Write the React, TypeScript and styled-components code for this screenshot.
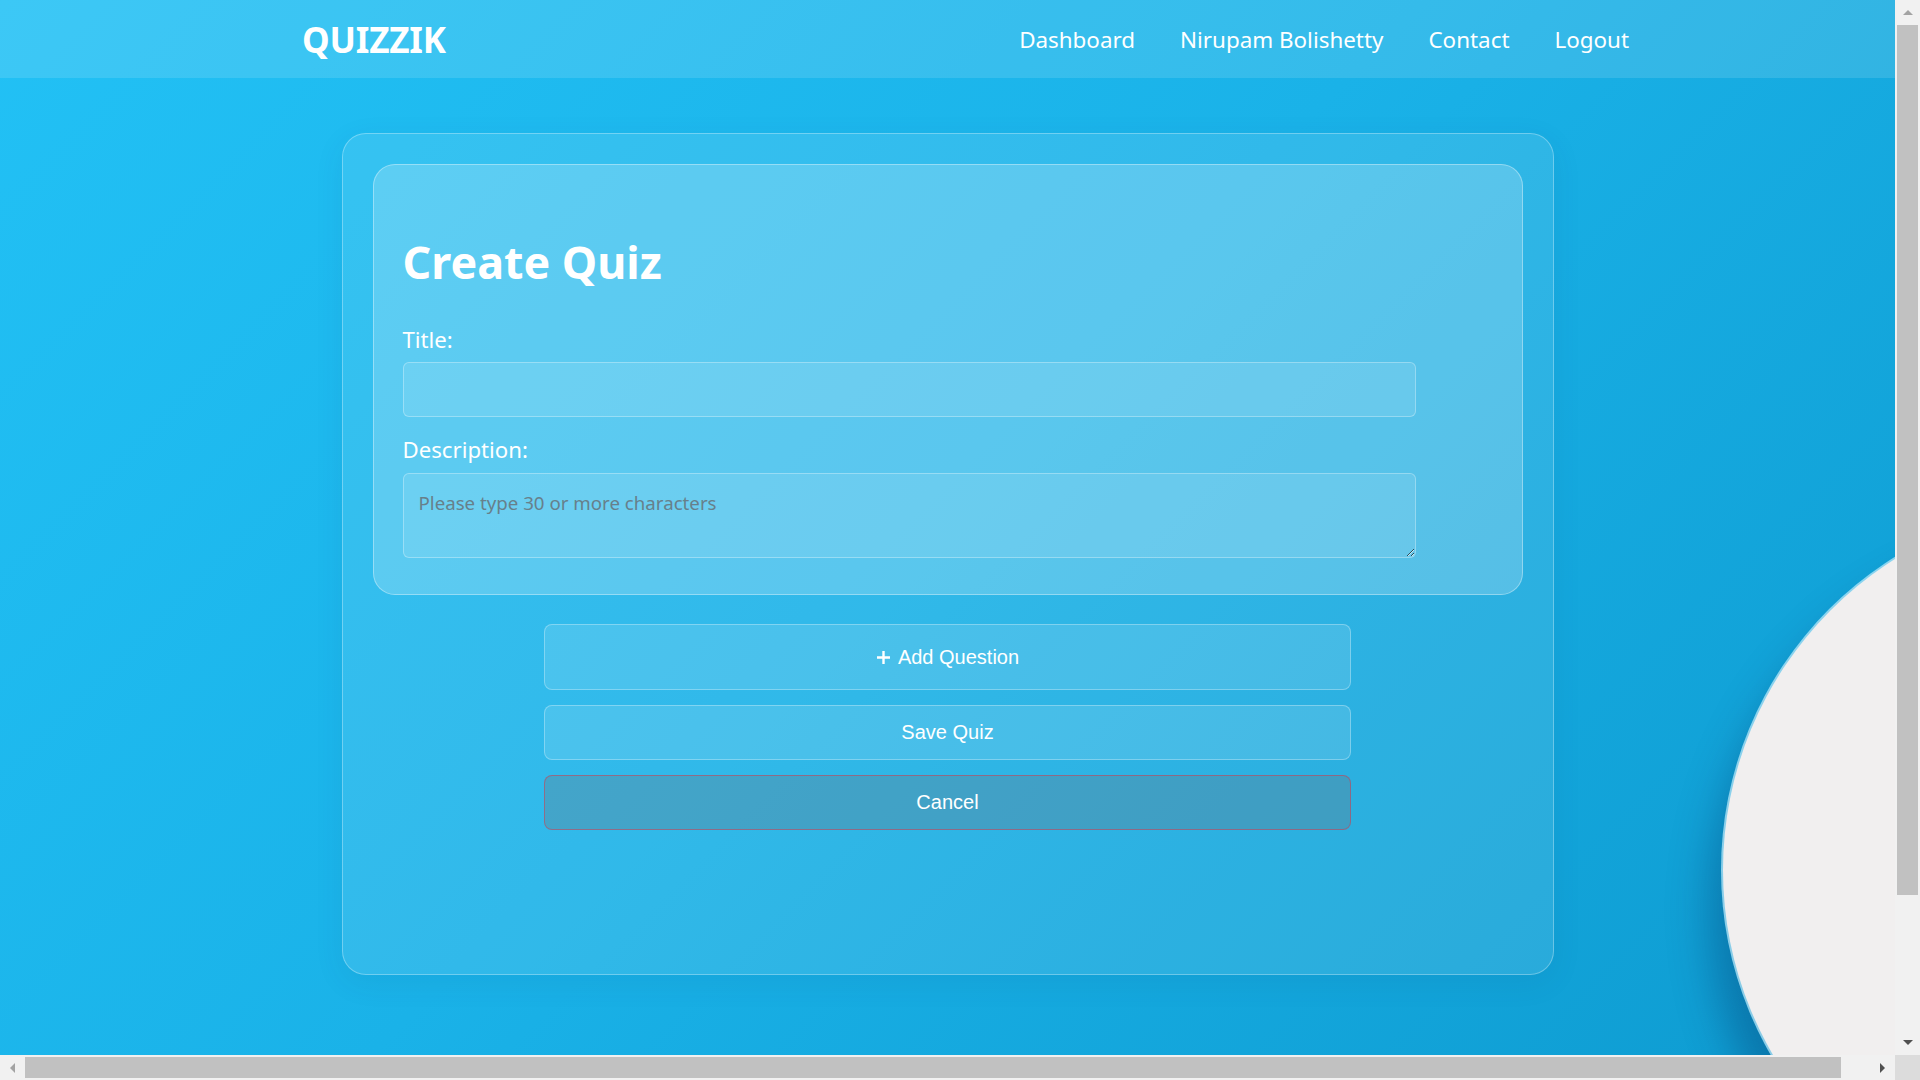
import React from 'react';
import styled, { createGlobalStyle } from 'styled-components';

const GlobalStyle = createGlobalStyle`
  * {
    box-sizing: border-box;
  }

  html,
  body {
    margin: 0;
    padding: 0;
    overflow: hidden;
    background: #f1f1f1;
  }

  body {
    font-family: 'Noto Sans', 'Open Sans', sans-serif;
    color: #fff;
  }
`;

const PlusIcon: React.FC = () => (
  <svg width="15" height="15" viewBox="0 0 15 15" aria-hidden="true">
    <path d="M7.5 1v13M1 7.5h13" stroke="#fff" strokeWidth="2.4" fill="none" />
  </svg>
);

type Dir = 'up' | 'down' | 'left' | 'right';

const ARROW_POINTS: Record<Dir, string> = {
  up: '0,5 5,0 10,5',
  down: '0,0 10,0 5,5',
  left: '5,0 5,10 0,5',
  right: '0,0 0,10 5,5',
};

const Arrow: React.FC<{ dir: Dir; active?: boolean }> = ({ dir, active }) => {
  const vertical = dir === 'up' || dir === 'down';
  return (
    <ArrowButton>
      <svg
        width={vertical ? 10 : 5}
        height={vertical ? 5 : 10}
        viewBox={vertical ? '0 0 10 5' : '0 0 5 10'}
      >
        <polygon points={ARROW_POINTS[dir]} fill={active ? '#505050' : '#a3a3a3'} />
      </svg>
    </ArrowButton>
  );
};

const NAV_LINKS = ['Dashboard', 'Nirupam Bolishetty', 'Contact', 'Logout'];

const App: React.FC = () => {
  return (
    <Frame>
      <GlobalStyle />
      <Viewport>
        <Page>
          <Plate />

          <NavBar>
            <Logo>QUIZZIK</Logo>
            <NavLinks>
              {NAV_LINKS.map(link => (
                <li key={link}>
                  <NavLink href="#">{link}</NavLink>
                </li>
              ))}
            </NavLinks>
          </NavBar>

          <Main>
            <OuterCard>
              <FormCard>
                <Heading>Create Quiz</Heading>
                <Label htmlFor="title">Title:</Label>
                <TextInput id="title" type="text" />
                <Label htmlFor="description">Description:</Label>
                <TextArea
                  id="description"
                  placeholder="Please type 30 or more characters"
                />
              </FormCard>

              <Actions>
                <ActionButton $tall>
                  <PlusIcon />
                  Add Question
                </ActionButton>
                <ActionButton>Save Quiz</ActionButton>
                <ActionButton $variant="cancel">Cancel</ActionButton>
              </Actions>
            </OuterCard>
          </Main>
        </Page>
      </Viewport>

      <VScroll>
        <Arrow dir="up" />
        <VTrack>
          <VThumb />
        </VTrack>
        <Arrow dir="down" active />
      </VScroll>

      <HScroll>
        <Arrow dir="left" />
        <HTrack>
          <HThumb />
        </HTrack>
        <Arrow dir="right" active />
      </HScroll>

      <Corner />
    </Frame>
  );
};

export default App;

// Frame (window with scrollbars)

const Frame = styled.div`
  display: grid;
  grid-template-columns: 1fr 25px;
  grid-template-rows: 1fr 25px;
  width: 100vw;
  height: 100vh;
`;

const Viewport = styled.div`
  overflow: hidden;
  min-width: 0;
  min-height: 0;
`;

const VScroll = styled.div`
  display: flex;
  flex-direction: column;
  background: #f1f1f1;
`;

const HScroll = styled.div`
  display: flex;
  background: #f1f1f1;
`;

const Corner = styled.div`
  background: #dcdcdc;
`;

const ArrowButton = styled.div`
  flex: 0 0 25px;
  width: 25px;
  height: 25px;
  display: flex;
  align-items: center;
  justify-content: center;
`;

const VTrack = styled.div`
  flex: 1;
  padding: 0 2px;
`;

const VThumb = styled.div`
  height: 870px;
  background: #c1c1c1;
`;

const HTrack = styled.div`
  flex: 1;
  padding: 2px 0;
`;

const HThumb = styled.div`
  width: 1816px;
  height: 100%;
  background: #c1c1c1;
`;

// Page

const Page = styled.div`
  position: relative;
  height: 1270px;
  background: linear-gradient(135deg, #22c1f5 0%, #1ab2e8 45%, #0c98cd 100%);
`;

const Plate = styled.div`
  position: absolute;
  left: 1723px;
  top: 503px;
  width: 734px;
  height: 734px;
  border-radius: 50%;
  background: #f1efef;
  box-shadow: 0 0 0 2px rgba(170, 225, 245, 0.8),
    -14px 40px 40px rgba(0, 50, 100, 0.35);
`;

const NavBar = styled.nav`
  position: relative;
  display: flex;
  justify-content: space-between;
  align-items: center;
  height: 78px;
  padding: 0 266px 0 302px;
  background: rgba(255, 255, 255, 0.12);
`;

const Logo = styled.h1`
  margin: 0;
  font-family: 'Noto Sans', 'Open Sans', sans-serif;
  font-size: 35px;
  font-weight: 700;
  letter-spacing: -0.2px;
  color: #fff;
`;

const NavLinks = styled.ul`
  display: flex;
  align-items: center;
  gap: 45px;
  list-style: none;
  margin: 0;
  padding: 0;
`;

const NavLink = styled.a`
  font-size: 22.4px;
  color: #fff;
  text-decoration: none;
`;

const Main = styled.main`
  position: relative;
  display: flex;
  justify-content: center;
  padding-top: 55px;
`;

const OuterCard = styled.section`
  width: 1212px;
  height: 842px;
  padding: 30px;
  background: rgba(255, 255, 255, 0.1);
  border: 1px solid rgba(255, 255, 255, 0.3);
  border-radius: 24px;
  box-shadow: 0 8px 30px rgba(0, 60, 110, 0.08);
`;

const FormCard = styled.div`
  padding: 32px 31px 31px 29px;
  background: rgba(255, 255, 255, 0.2);
  border: 1px solid rgba(255, 255, 255, 0.35);
  border-radius: 22px;
`;

const Heading = styled.h2`
  margin: 38px 0 38px;
  font-size: 44.8px;
  font-weight: 700;
  line-height: 1.2;
  color: #fff;
`;

const Label = styled.label`
  display: block;
  margin-bottom: 9px;
  font-size: 22.2px;
  line-height: 1.2;
  color: #fff;
`;

const fieldStyles = `
  display: block;
  width: 1013px;
  padding: 15px;
  font-family: 'Noto Sans', 'Open Sans', sans-serif;
  font-size: 18.7px;
  color: #fff;
  background: rgba(255, 255, 255, 0.1);
  border: 1px solid rgba(255, 255, 255, 0.3);
  border-radius: 6px;
  outline: none;

  &::placeholder {
    color: #67808b;
  }
`;

const TextInput = styled.input`
  ${fieldStyles}
  height: 55px;
  margin-bottom: 20px;
`;

const TextArea = styled.textarea`
  ${fieldStyles}
  height: 85px;
  margin-bottom: 5px;
  padding-top: 16px;
  resize: both;
`;

const Actions = styled.div`
  display: flex;
  flex-direction: column;
  align-items: center;
  gap: 15px;
  margin-top: 29px;
`;

const ActionButton = styled.button<{ $tall?: boolean; $variant?: 'cancel' }>`
  display: flex;
  align-items: center;
  justify-content: center;
  gap: 7px;
  width: 807px;
  height: ${p => (p.$tall ? '66px' : '55px')};
  font-family: 'Liberation Sans', Arial, sans-serif;
  font-size: 20px;
  color: #fff;
  background: ${p =>
    p.$variant === 'cancel'
      ? 'rgba(108, 117, 125, 0.3)'
      : 'rgba(255, 255, 255, 0.12)'};
  border: 1px solid
    ${p =>
      p.$variant === 'cancel'
        ? 'rgba(220, 53, 69, 0.5)'
        : 'rgba(255, 255, 255, 0.3)'};
  border-radius: 8px;
  cursor: pointer;
`;
